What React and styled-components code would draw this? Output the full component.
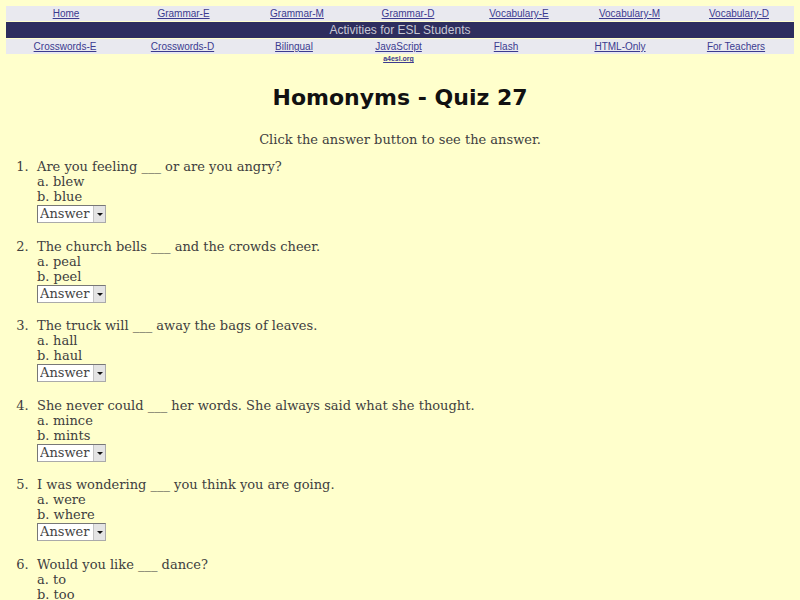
import React from "react";
import styled, { createGlobalStyle } from "styled-components";

const Global = createGlobalStyle`
  html, body { background: #ffffcc; }
  body { margin: 6px; color: #404040; font-family: "DejaVu Serif", serif; }
`;

const NavRow = styled.div`
  display: grid;
  grid-template-columns: ${(p) => p.$cols};
  background: #e9e9ef;
`;

const NavCell = styled.div`
  text-align: center;
  font-family: "Liberation Sans", Arial, sans-serif;
  font-size: 10px;
  height: 15px;
  line-height: 15px;
  white-space: nowrap;
`;

const NavLink = styled.a`
  color: #3b3b8f;
  text-decoration: underline;
`;

const Banner = styled.div`
  background: #2e2e5e;
  color: #c8c8d4;
  text-align: center;
  font-family: "Liberation Sans", Arial, sans-serif;
  font-size: 12px;
  height: 16px;
  line-height: 16px;
  margin: 1px 0;
`;

const SubRow = styled.div`
  display: grid;
  grid-template-columns: ${(p) => p.$cols};
  height: 10px;
`;

const SubCell = styled.div`
  text-align: center;
  font-size: 7px;
  line-height: 10px;
  font-family: "Liberation Sans", Arial, sans-serif;
`;

const SubLink = styled.a`
  font-weight: bold;
  color: #3b3b8f;
  text-decoration: underline;
`;

const Title = styled.h1`
  margin: 19px 0 0;
  text-align: center;
  font-family: "DejaVu Sans", sans-serif;
  font-weight: bold;
  font-size: 22px;
  color: #111;
  line-height: 30px;
`;

const Subtitle = styled.p`
  margin: 19px 0 0;
  text-align: center;
  font-size: 13px;
  line-height: 15px;
`;

const List = styled.ol`
  margin: 12px 0 0;
  padding-left: 31px;
  font-size: 13px;
  line-height: 15px;
`;

const Item = styled.li`
  margin-bottom: 15.6px;
  &::marker {
    content: counter(list-item) ".\\00a0\\00a0";
  }
`;

const Option = styled.div``;

const SelectWrap = styled.div`
  position: relative;
  width: 69px;
  height: 18px;
  margin-top: 1px;
`;

const Select = styled.select`
  appearance: none;
  -webkit-appearance: none;
  display: block;
  width: 69px;
  height: 18px;
  border: 1px solid #aaa;
  border-top-color: #777;
  border-left-color: #777;
  background: #fff;
  color: #444;
  font-family: "DejaVu Serif", serif;
  font-size: 13px;
  line-height: 16px;
  padding: 0 0 0 2px;
  margin: 0;
  border-radius: 0;
`;

const Arrow = styled.span`
  position: absolute;
  right: 1px;
  top: 1px;
  width: 11px;
  height: 16px;
  background: #e4e4e4;
  border-left: 1px solid #c4c4c4;
  pointer-events: none;
  &::after {
    content: "";
    position: absolute;
    left: 3px;
    top: 7px;
    border-left: 3px solid transparent;
    border-right: 3px solid transparent;
    border-top: 3px solid #111;
  }
`;

const row1 = ["Home", "Grammar-E", "Grammar-M", "Grammar-D", "Vocabulary-E", "Vocabulary-M", "Vocabulary-D"];
const row3 = ["Crosswords-E", "Crosswords-D", "Bilingual", "JavaScript", "Flash", "HTML-Only", "For Teachers"];
const cols1 = "120fr 115fr 112fr 110fr 112fr 109fr 110fr";
const cols3 = "118fr 117fr 106fr 103fr 112fr 116fr 116fr";

const questions = [
  ["Are you feeling ___ or are you angry?", "blew", "blue"],
  ["The church bells ___ and the crowds cheer.", "peal", "peel"],
  ["The truck will ___ away the bags of leaves.", "hall", "haul"],
  ["She never could ___ her words. She always said what she thought.", "mince", "mints"],
  ["I was wondering ___ you think you are going.", "were", "where"],
  ["Would you like ___ dance?", "to", "too"],
];

export default function App() {
  return (
    <>
      <Global />
      <nav>
        <NavRow $cols={cols1}>
          {row1.map((t) => (
            <NavCell key={t}><NavLink href="#">{t}</NavLink></NavCell>
          ))}
        </NavRow>
        <Banner>Activities for ESL Students</Banner>
        <NavRow $cols={cols3}>
          {row3.map((t) => (
            <NavCell key={t}><NavLink href="#">{t}</NavLink></NavCell>
          ))}
        </NavRow>
        <SubRow $cols={cols3}>
          {row3.map((t, i) => (
            <SubCell key={t}>{i === 3 ? <SubLink href="#">a4esl.org</SubLink> : null}</SubCell>
          ))}
        </SubRow>
      </nav>
      <Title>Homonyms - Quiz 27</Title>
      <Subtitle>Click the answer button to see the answer.</Subtitle>
      <List>
        {questions.map(([q, a, b]) => (
          <Item key={q}>
            {q}
            <Option>a. {a}</Option>
            <Option>b. {b}</Option>
            <SelectWrap>
              <Select defaultValue="Answer">
                <option>Answer</option>
                <option>{a}</option>
                <option>{b}</option>
              </Select>
              <Arrow />
            </SelectWrap>
          </Item>
        ))}
      </List>
    </>
  );
}
